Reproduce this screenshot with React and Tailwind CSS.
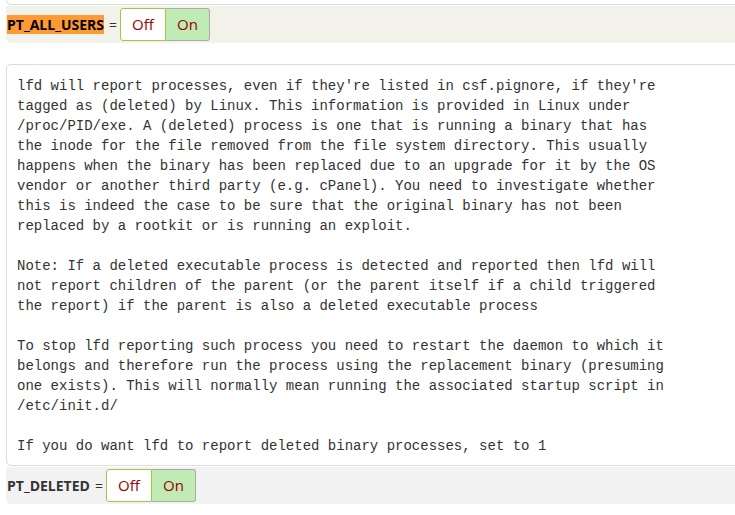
import React from "react";

const text = `lfd will report processes, even if they're listed in csf.pignore, if they're
tagged as (deleted) by Linux. This information is provided in Linux under
/proc/PID/exe. A (deleted) process is one that is running a binary that has
the inode for the file removed from the file system directory. This usually
happens when the binary has been replaced due to an upgrade for it by the OS
vendor or another third party (e.g. cPanel). You need to investigate whether
this is indeed the case to be sure that the original binary has not been
replaced by a rootkit or is running an exploit.

Note: If a deleted executable process is detected and reported then lfd will
not report children of the parent (or the parent itself if a child triggered
the report) if the parent is also a deleted executable process

To stop lfd reporting such process you need to restart the daemon to which it
belongs and therefore run the process using the replacement binary (presuming
one exists). This will normally mean running the associated startup script in
/etc/init.d/

If you do want lfd to report deleted binary processes, set to 1`;

function Toggle() {
  return (
    <div className="flex h-[33px] text-[15px] text-[#990000]">
      <div className="flex items-center justify-center w-[46px] bg-white border border-[#a9c24e] rounded-l-[3px]">
        Off
      </div>
      <div className="flex items-center justify-center w-[44px] bg-[#c1ebb5] border border-[#aaa] border-l-0 rounded-r-[3px]">
        On
      </div>
    </div>
  );
}

export default function App() {
  return (
    <div
      className="w-[735px] h-[515px] overflow-hidden bg-white"
      style={{ fontFamily: "'Open Sans', 'Liberation Sans', sans-serif" }}
    >
      <div className="ml-[6px] w-[800px]">
        <div className="h-[5px] border-x border-b border-[#ddd] rounded-b-[5px] bg-white" />
        <div className="mt-px h-[37px] bg-[#f3f2ea] rounded-b-[5px] flex items-center pl-px text-[14px] text-[#333]">
          <span className="bg-[#ff9933] font-bold text-black leading-[19px]">PT_ALL_USERS</span>
          <span className="ml-[5px] mr-[3px]">=</span>
          <Toggle />
        </div>
        <div
          className="mt-[21px] border border-[#ddd] rounded-[5px] px-[10px] pt-[11px] pb-[9px] whitespace-pre text-[14px] leading-[20px] text-[#333]"
          style={{ fontFamily: "'Liberation Mono', 'Courier New', monospace" }}
        >
          {text}
        </div>
        <div className="mt-px h-[37px] bg-[#f2f2f2] rounded-b-[5px] flex items-center pl-px text-[14px] text-[#333]">
          <span className="font-bold">PT_DELETED</span>
          <span className="ml-[5px] mr-[3px]">=</span>
          <Toggle />
        </div>
      </div>
    </div>
  );
}
